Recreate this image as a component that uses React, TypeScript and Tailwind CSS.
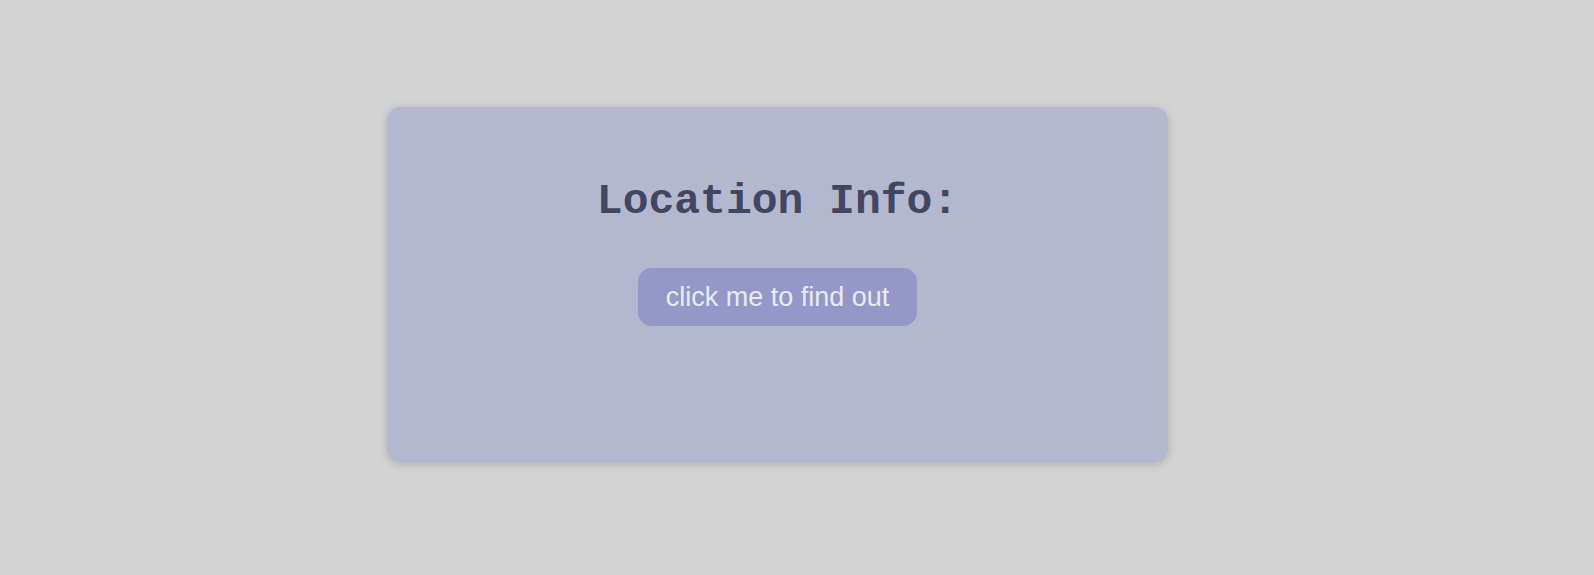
export default function App() {
  return (
    <div className="min-h-[575px] w-full bg-[#d3d3d3] pt-[107px]">
      <div className="ml-[387px] flex h-[355px] w-[781px] flex-col items-center rounded-[14px] bg-[#b3b8cf] pt-[70px] shadow-[0_2px_10px_rgba(0,0,0,0.18)]">
        <h1 className="font-['Liberation_Mono','Courier_New',monospace] text-[43px] font-bold leading-[50px] text-[#434660]">
          Location Info:
        </h1>
        <button className="mt-[41px] rounded-[14px] bg-[#9597c8] px-[28px] py-[13px] font-['Liberation_Sans',Arial,sans-serif] text-[27px] leading-[32px] text-[#e8eaf8]">
          click me to find out
        </button>
      </div>
    </div>
  );
}
